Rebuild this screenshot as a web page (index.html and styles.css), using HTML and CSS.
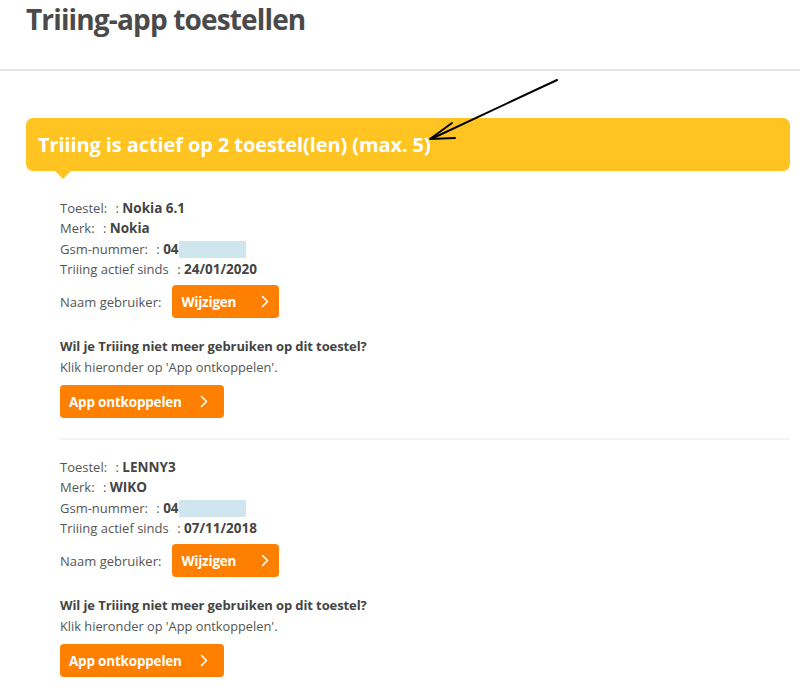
FILE: index.html
```html
<!DOCTYPE html>
<html lang="nl">
<head>
<meta charset="utf-8">
<title>Triiing-app toestellen</title>
<link rel="stylesheet" href="styles.css">
</head>
<body>
<header class="page-header">
  <h1 class="page-title">Triiing-app toestellen</h1>
</header>
<main class="content">
  <div class="banner">
    <span class="banner-text">Triiing is actief op 2 toestel(len) (max. 5)</span>
    <svg class="annotation" width="140" height="70" viewBox="0 0 140 70" aria-hidden="true">
      <path d="M130 2 L4 61" stroke="#000" stroke-width="2" fill="none" stroke-linecap="round"/>
      <path d="M25 45 L3 61 L28 60" stroke="#000" stroke-width="2" fill="none" stroke-linecap="round" stroke-linejoin="round"/>
    </svg>
  </div>

  <section class="device">
    <ul class="specs">
      <li><span class="lbl">Toestel:</span> <span class="sep">:</span> <b>Nokia 6.1</b></li>
      <li><span class="lbl">Merk:</span> <span class="sep">:</span> <b>Nokia</b></li>
      <li><span class="lbl">Gsm-nummer:</span> <span class="sep">:</span> <b>04</b><span class="redact"></span></li>
      <li><span class="lbl">Triiing actief sinds</span> <span class="sep">:</span> <b>24/01/2020</b></li>
    </ul>
    <div class="user-row">
      <span class="lbl">Naam gebruiker:</span>
      <a class="btn btn-small" href="#">Wijzigen<svg class="chev" width="8" height="13" viewBox="0 0 8 13"><path d="M1.5 1.5 L6.5 6.5 L1.5 11.5" stroke="#fff" stroke-width="1.6" fill="none" stroke-linecap="round" stroke-linejoin="round"/></svg></a>
    </div>
    <p class="q">Wil je Triiing niet meer gebruiken op dit toestel?</p>
    <p class="hint">Klik hieronder op 'App ontkoppelen'.</p>
    <a class="btn btn-wide" href="#">App ontkoppelen<svg class="chev" width="8" height="13" viewBox="0 0 8 13"><path d="M1.5 1.5 L6.5 6.5 L1.5 11.5" stroke="#fff" stroke-width="1.6" fill="none" stroke-linecap="round" stroke-linejoin="round"/></svg></a>
  </section>

  <section class="device">
    <ul class="specs">
      <li><span class="lbl">Toestel:</span> <span class="sep">:</span> <b>LENNY3</b></li>
      <li><span class="lbl">Merk:</span> <span class="sep">:</span> <b>WIKO</b></li>
      <li><span class="lbl">Gsm-nummer:</span> <span class="sep">:</span> <b>04</b><span class="redact"></span></li>
      <li><span class="lbl">Triiing actief sinds</span> <span class="sep">:</span> <b>07/11/2018</b></li>
    </ul>
    <div class="user-row">
      <span class="lbl">Naam gebruiker:</span>
      <a class="btn btn-small" href="#">Wijzigen<svg class="chev" width="8" height="13" viewBox="0 0 8 13"><path d="M1.5 1.5 L6.5 6.5 L1.5 11.5" stroke="#fff" stroke-width="1.6" fill="none" stroke-linecap="round" stroke-linejoin="round"/></svg></a>
    </div>
    <p class="q">Wil je Triiing niet meer gebruiken op dit toestel?</p>
    <p class="hint">Klik hieronder op 'App ontkoppelen'.</p>
    <a class="btn btn-wide" href="#">App ontkoppelen<svg class="chev" width="8" height="13" viewBox="0 0 8 13"><path d="M1.5 1.5 L6.5 6.5 L1.5 11.5" stroke="#fff" stroke-width="1.6" fill="none" stroke-linecap="round" stroke-linejoin="round"/></svg></a>
  </section>
</main>
</body>
</html>
```
FILE: styles.css
```css
html, body {
  margin: 0;
  padding: 0;
  background: #fff;
}
body {
  font-family: "Open Sans", "Liberation Sans", sans-serif;
  color: #555;
  overflow: hidden;
}
.page-header {
  height: 69px;
  border-bottom: 2px solid #e6e6e6;
  padding: 0 26px;
}
.page-title {
  margin: 0;
  font-size: 28px;
  line-height: 38px;
  font-weight: 700;
  color: #4a4a4a;
  letter-spacing: -0.85px;
}
.content {
  padding: 47px 10px 0 26px;
}
.banner {
  position: relative;
  height: 53px;
  background: #ffc421;
  border-radius: 7px;
  display: flex;
  align-items: center;
  padding: 0 12px;
}
.banner::after {
  content: "";
  position: absolute;
  left: 29px;
  bottom: -8px;
  border-left: 8px solid transparent;
  border-right: 8px solid transparent;
  border-top: 8px solid #ffc421;
}
.banner-text {
  color: #fff;
  font-weight: 700;
  font-size: 20px;
  letter-spacing: -0.1px;
}
.annotation {
  position: absolute;
  left: 401px;
  top: -40px;
}
.device {
  margin-left: 34px;
  padding: 27px 0 20px;
  border-bottom: 2px solid #f4f4f4;
}
.device + .device {
  padding-top: 17px;
  border-bottom: none;
}
.specs {
  list-style: none;
  margin: 0;
  padding: 0;
  font-size: 13px;
  line-height: 20.3px;
}
.specs b {
  font-weight: 700;
  font-size: 13.5px;
  color: #444;
}
.sep {
  margin-left: 5px;
}
.redact {
  display: inline-block;
  width: 67px;
  height: 17px;
  background: #cfe6ee;
  vertical-align: -4px;
}
.lbl {
  font-size: 13px;
}
.user-row {
  display: flex;
  align-items: center;
  gap: 11px;
  margin-top: 6px;
}
.btn {
  display: inline-flex;
  align-items: center;
  justify-content: space-between;
  height: 33px;
  box-sizing: border-box;
  background: #ff8000;
  color: #fff;
  font-weight: 700;
  font-size: 13.5px;
  text-decoration: none;
  border-radius: 4px;
  padding: 0 10px 0 9px;
  letter-spacing: -0.2px;
}
.btn-small {
  width: 107px;
}
.btn-wide {
  width: 164px;
  padding-right: 16px;
  margin-top: 8px;
}
.q {
  margin: 18px 0 0;
  font-weight: 700;
  font-size: 13px;
  color: #444;
  line-height: 20px;
  letter-spacing: -0.1px;
}
.hint {
  margin: 1px 0 0;
  font-size: 12.8px;
  line-height: 20px;
}
```
